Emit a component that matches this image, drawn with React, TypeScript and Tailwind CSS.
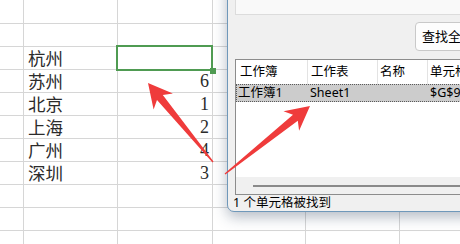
import React from "react";

const cells: [string, string][] = [
  ["", ""],
  ["", ""],
  ["杭州", ""],
  ["苏州", "6"],
  ["北京", "1"],
  ["上海", "2"],
  ["广州", "4"],
  ["深圳", "3"],
  ["", ""],
  ["", ""],
  ["", ""],
];

type Pt = [number, number];

function arrowPoints(tail: Pt, tip: Pt, head = 24, wing = 12.5, neck = 3.8, end = 0.6) {
  const dx = tip[0] - tail[0];
  const dy = tip[1] - tail[1];
  const len = Math.hypot(dx, dy);
  const u: Pt = [dx / len, dy / len];
  const n: Pt = [-u[1], u[0]];
  const at = (base: Pt, back: number, side: number): string =>
    `${(base[0] - u[0] * back + n[0] * side).toFixed(1)},${(base[1] - u[1] * back + n[1] * side).toFixed(1)}`;
  return [
    at(tail, 0, end),
    at(tip, head * 0.78, neck),
    at(tip, head, wing),
    at(tip, 0, 0),
    at(tip, head, -wing),
    at(tip, head * 0.78, -neck),
    at(tail, 0, -end),
  ].join(" ");
}

function Sheet() {
  return (
    <div className="flex flex-col" style={{ fontFamily: '"Noto Sans CJK SC", sans-serif' }}>
      {cells.map(([name, value], i) => (
        <div
          key={i}
          className={`flex border-b border-[#d6d6d6] ${i === 0 ? "h-[24px]" : "h-[23px]"}`}
        >
          <div className="w-[24px] shrink-0 border-r border-[#d6d6d6]" />
          <div className="flex w-[94px] shrink-0 items-center border-r border-[#d6d6d6] pl-[4px] text-[17.5px] text-[#2b2b2b]">
            {name}
          </div>
          <div
            className="relative flex w-[95px] shrink-0 items-center justify-end border-r border-[#d6d6d6] pr-[3px] text-[18px] text-[#2b2b2b]"
            style={{ fontFamily: '"Liberation Serif", serif' }}
          >
            {value}
            {i === 2 && (
              <>
                <div className="absolute -top-[2px] -left-[2px] -right-[1px] -bottom-[2px] border-2 border-[#4f9b52]" />
                <div className="absolute -right-[4px] -bottom-[5px] z-10 h-[6px] w-[6px] bg-[#4f9b52]" />
              </>
            )}
          </div>
          <div className="w-[93px] shrink-0 border-r border-[#d6d6d6]" />
          <div className="w-[94px] shrink-0 border-r border-[#d6d6d6]" />
          <div className="flex-1" />
        </div>
      ))}
    </div>
  );
}

function FindDialog() {
  return (
    <div
      className="absolute top-[-20px] left-[227px] z-20 w-[320px] rounded-[7px] border border-[#6f98ba] bg-[#f0f0f0] text-[12.5px] text-black shadow-[0_5px_14px_rgba(40,60,90,0.35)]"
      style={{ fontFamily: '"Noto Sans", "Noto Sans CJK SC", sans-serif' }}
    >
      <div className="ml-[7px] h-[34px] border-b border-l border-[#dcdcdc] bg-[#f9f9f9]" />

      <div className="mt-[7px] ml-[187px] flex h-[29px] w-[100px] items-center rounded-[4px] border border-[#c9c9c9] bg-[#fdfdfd] pl-[6px] text-[13px]">
        查找全部(I)
      </div>

      <div className="mt-[8px] ml-[7px] flex h-[136px] flex-col border border-[#8c8c8c] bg-white">
        <div className="flex h-[24px] shrink-0 items-center">
          <div className="flex h-full w-[72px] shrink-0 items-center border-r border-[#e3e3e3] pl-[4px]">工作簿</div>
          <div className="flex h-full w-[70px] shrink-0 items-center border-r border-[#e3e3e3] pl-[3px]">工作表</div>
          <div className="flex h-full w-[50px] shrink-0 items-center border-r border-[#e3e3e3] pl-[2px]">名称</div>
          <div className="flex h-full flex-1 items-center pl-[2px]">单元格</div>
        </div>
        <div className="flex h-[18px] shrink-0 items-center border border-dotted border-[#5a5a5a] bg-[#cccccc]">
          <div className="w-[71px] shrink-0 pl-[1px]">工作簿1</div>
          <div className="w-[70px] shrink-0 pl-[2px]">Sheet1</div>
          <div className="w-[50px] shrink-0" />
          <div className="flex-1 pl-[2px]">$G$9</div>
        </div>
        <div className="flex-1" />
        <div className="flex h-[17px] shrink-0 items-center bg-[#f0f0f0] pl-[17px]">
          <div className="h-[2px] flex-1 bg-[#8a8a8a]" />
        </div>
      </div>

      <div className="flex h-[16px] items-center pl-[5px] text-[12.5px]">1 个单元格被找到</div>
    </div>
  );
}

export default function App() {
  return (
    <div className="relative h-[244px] w-[460px] overflow-hidden bg-white">
      <Sheet />
      <FindDialog />
      <svg className="pointer-events-none absolute inset-0 z-30" width="460" height="244" viewBox="0 0 460 244">
        <polygon points={arrowPoints([213, 162], [148, 83])} fill="#ef3b3b" />
        <polygon points={arrowPoints([225, 174], [310, 106])} fill="#ef3b3b" />
      </svg>
    </div>
  );
}
